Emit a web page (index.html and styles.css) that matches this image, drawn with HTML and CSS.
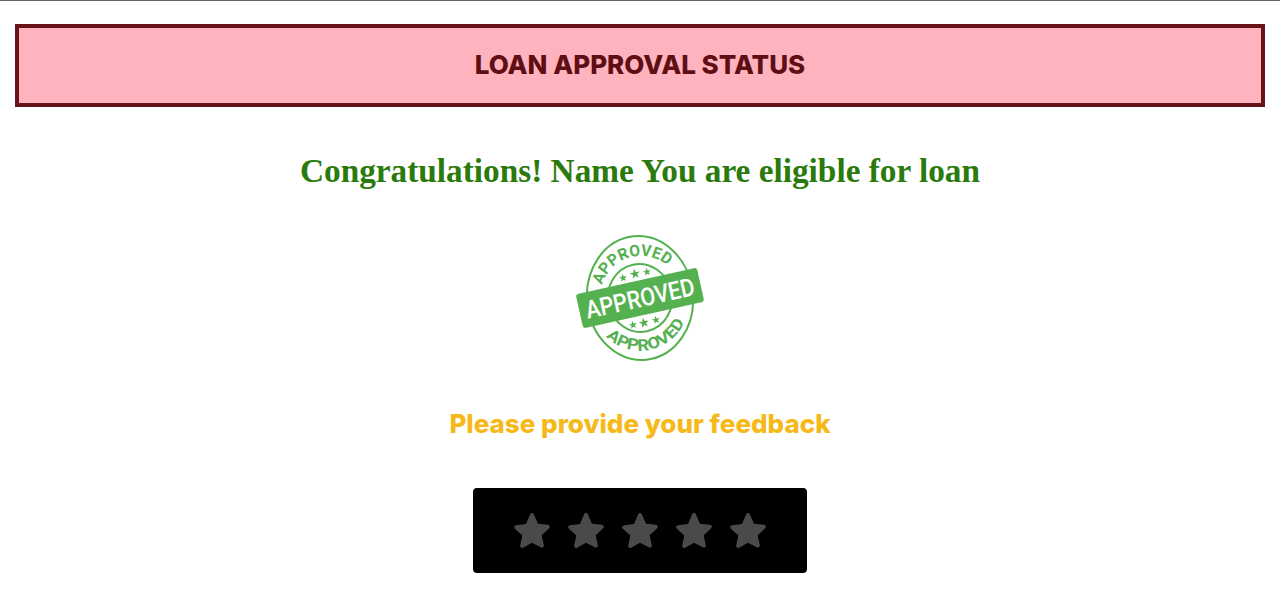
FILE: index.html
```html
<!DOCTYPE html>
<html lang="en">
<head>
<meta charset="utf-8">
<title>Loan Approval Status</title>
<link rel="stylesheet" href="styles.css">
</head>
<body>
<header class="banner"><h1 class="banner-title">LOAN APPROVAL STATUS</h1></header>
<main class="content">
  <h2 class="message">Congratulations! Name You are eligible for loan</h2>
  <svg class="stamp" viewBox="0 0 130 130" width="130" height="130" aria-label="Approved stamp">
    <defs>
      <path id="arcTop" d="M27 52 A40.500 40.500 0 0 1 103 47"/>
      <path id="arcBottom" d="M31 103.500 A50 52 0 0 0 112 84"/>
      <polygon id="tinyStar" points="0,-5 1.2,-1.6 4.8,-1.5 1.900,.6 3,4 0,2 -3,4 -1.900,.6 -4.800,-1.500 -1.200,-1.600"/>
    </defs>
    <g class="stamp-lines">
      <ellipse cx="65" cy="65" rx="53" ry="62" transform="rotate(-6 65 65)"/>
      <ellipse cx="65" cy="65" rx="32" ry="34" transform="rotate(-12 65 65)"/>
    </g>
    <text class="stamp-ring"><textPath href="#arcTop" textLength="81" lengthAdjust="spacingAndGlyphs">APPROVED</textPath></text>
    <text class="stamp-ring"><textPath href="#arcBottom" textLength="93" lengthAdjust="spacingAndGlyphs">APPROVED</textPath></text>
    <g class="stamp-stars">
      <use href="#tinyStar" transform="translate(48 45) rotate(-12) scale(.85)"/>
      <use href="#tinyStar" transform="translate(60 41) rotate(-12) scale(1.05)"/>
      <use href="#tinyStar" transform="translate(72 39) rotate(-12) scale(.85)"/>
      <use href="#tinyStar" transform="translate(58 92) rotate(-12) scale(.85)"/>
      <use href="#tinyStar" transform="translate(69 90) rotate(-12) scale(1.05)"/>
      <use href="#tinyStar" transform="translate(81 87) rotate(-12) scale(.85)"/>
    </g>
    <g transform="rotate(-12.5 65 65)">
      <rect class="stamp-band" x="3" y="47.500" width="124" height="35" rx="3"/>
      <text class="stamp-label" transform="translate(65 74) scale(.87 1)" text-anchor="middle">APPROVED</text>
    </g>
  </svg>
  <h3 class="prompt">Please provide your feedback</h3>
  <div class="rating">
    <svg class="star" viewBox="0 1 24 24"><path d="M12 2.200c.5 0 .9.300 1.100.800l2.500 5.600 6 .700c1.100.100 1.500 1.400.700 2.100l-4.500 4.100 1.300 6c.200 1-.900 1.800-1.800 1.300L12 20l-5.300 3c-.900.500-2-.300-1.800-1.300l1.300-6-4.500-4.100c-.800-.700-.400-2 .700-2.100l6-.700L10.900 3c.200-.500.600-.800 1.100-.8z"/></svg>
    <svg class="star" viewBox="0 1 24 24"><path d="M12 2.200c.5 0 .9.300 1.100.800l2.500 5.600 6 .700c1.100.100 1.500 1.400.700 2.100l-4.500 4.100 1.300 6c.200 1-.900 1.800-1.800 1.300L12 20l-5.300 3c-.900.500-2-.300-1.800-1.300l1.300-6-4.500-4.100c-.800-.700-.400-2 .700-2.100l6-.700L10.900 3c.200-.500.600-.800 1.100-.8z"/></svg>
    <svg class="star" viewBox="0 1 24 24"><path d="M12 2.200c.5 0 .9.300 1.100.800l2.500 5.600 6 .700c1.100.100 1.500 1.400.700 2.100l-4.500 4.100 1.300 6c.200 1-.900 1.800-1.800 1.300L12 20l-5.300 3c-.900.500-2-.300-1.800-1.300l1.300-6-4.500-4.100c-.800-.700-.400-2 .700-2.100l6-.700L10.900 3c.200-.500.600-.800 1.100-.8z"/></svg>
    <svg class="star" viewBox="0 1 24 24"><path d="M12 2.200c.5 0 .9.300 1.100.800l2.500 5.600 6 .700c1.100.100 1.500 1.400.700 2.100l-4.500 4.100 1.300 6c.200 1-.900 1.800-1.800 1.300L12 20l-5.300 3c-.900.500-2-.300-1.800-1.300l1.300-6-4.500-4.100c-.800-.700-.400-2 .700-2.100l6-.700L10.900 3c.200-.500.600-.800 1.100-.8z"/></svg>
    <svg class="star" viewBox="0 1 24 24"><path d="M12 2.200c.5 0 .9.300 1.100.800l2.500 5.600 6 .700c1.100.100 1.500 1.400.700 2.100l-4.500 4.100 1.300 6c.200 1-.900 1.800-1.800 1.300L12 20l-5.300 3c-.900.500-2-.300-1.800-1.300l1.300-6-4.500-4.100c-.800-.700-.400-2 .700-2.100l6-.7L10.900 3c.2-.5.6-.8 1.100-.8z"/></svg>
  </div>
</main>
</body>
</html>
```
FILE: styles.css
```css
* { box-sizing: border-box; }
html, body { height: 100%; }
body {
  margin: 0;
  background: #fff;
  border-top: 1px solid #666;
  overflow: hidden;
  font-family: "Inter", "Open Sans", sans-serif;
}
.banner {
  margin: 23px 15px 0;
  height: 83px;
  background: #ffb3be;
  border: 4px solid #681318;
  display: flex;
  align-items: center;
  justify-content: center;
}
.banner-title {
  margin: 0 0 3px;
  font-size: 26px;
  font-weight: 800;
  color: #5f0f14;
}
.content {
  display: flex;
  flex-direction: column;
  align-items: center;
}
.message {
  margin: 44px 0 0;
  font-family: "Liberation Serif", serif;
  font-size: 33.3px;
  line-height: 40px;
  font-weight: 700;
  color: #2a7a0c;
}
.stamp { margin-top: 42px; display: block; }
.stamp-lines ellipse { fill: none; stroke: #55b14f; stroke-width: 2; }
.stamp-ring { font-family: "Roboto", sans-serif; font-weight: 700; font-size: 16px; fill: #55b14f; }
.stamp-stars { fill: #55b14f; }
.stamp-band { fill: #55b14f; }
.stamp-label { font-family: "Roboto", sans-serif; font-weight: 500; font-size: 25px; fill: #fff; }
.prompt {
  margin: 43px 0 0;
  font-size: 26px;
  line-height: 36px;
  font-weight: 800;
  color: #f6b91a;
}
.rating {
  margin-top: 46px;
  width: 334px;
  height: 85px;
  background: #000;
  border-radius: 4px;
  display: flex;
  align-items: center;
  justify-content: center;
  gap: 14px;
}
.star { width: 40px; height: 40px; fill: #4a4a4a; display: block; }
```
